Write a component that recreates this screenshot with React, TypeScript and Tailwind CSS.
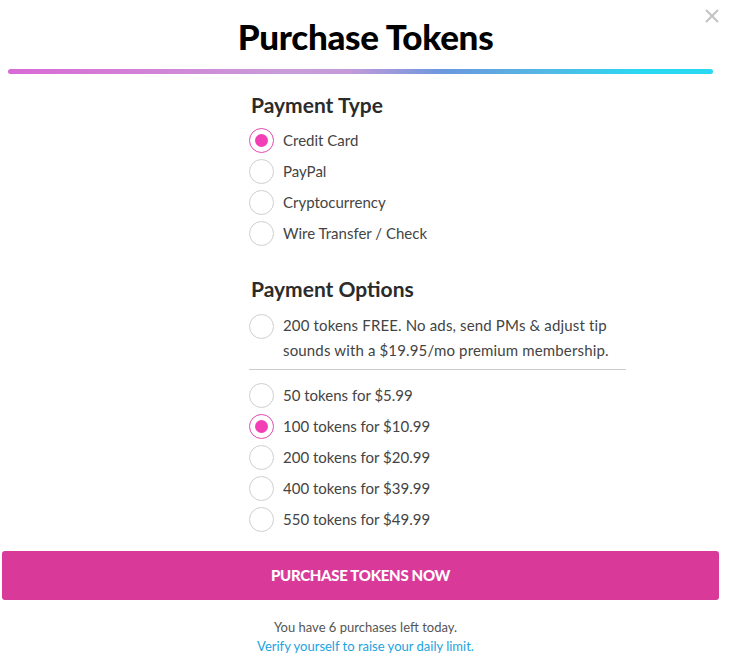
import React from "react";

function Radio({ checked }: { checked?: boolean }) {
  return checked ? (
    <span className="flex h-[25px] w-[25px] shrink-0 items-center justify-center rounded-full border border-[#e04aae] bg-white">
      <span className="h-[13px] w-[13px] rounded-full bg-[#f23fb6]" />
    </span>
  ) : (
    <span className="h-[25px] w-[25px] shrink-0 rounded-full border border-[#cfcfcf] bg-white" />
  );
}

function Option({ label, checked }: { label: string; checked?: boolean }) {
  return (
    <div className="flex h-[31px] items-center gap-[9px]">
      <Radio checked={checked} />
      <span className="text-[15px] text-[#444]">{label}</span>
    </div>
  );
}

export default function App() {
  const body = { fontFamily: "Lato, 'Open Sans', sans-serif" };
  return (
    <div className="relative h-[658px] w-[731px] bg-white" style={body}>
      <button className="absolute right-[12px] top-[9px]">
        <svg width="14" height="14" viewBox="0 0 14 14">
          <path d="M1 1L13 13M13 1L1 13" stroke="#c2c2c2" strokeWidth="2" />
        </svg>
      </button>
      <div className="flex flex-col items-center pt-[17px]">
        <h1 className="text-[35px] font-black leading-[38px] tracking-[-0.3px] text-black">
          Purchase Tokens
        </h1>
      </div>
      <div className="mx-[8px] mt-[14px] h-[5px] w-[705px] rounded-full bg-[linear-gradient(90deg,#d96ad5_0%,#c99cd9_40%,#c59ad9_48%,#6a98de_62%,#55b6e3_75%,#2ad8f2_90%,#2ad8f2_100%)]" />
      <div className="ml-[249px] mt-[19px] w-[377px]">
        <h2 className="pl-[2px] text-[21px] font-bold leading-[24px] text-[#2b2b2b]">Payment Type</h2>
        <div className="mt-[8px]">
          <Option label="Credit Card" checked />
          <Option label="PayPal" />
          <Option label="Cryptocurrency" />
          <Option label="Wire Transfer / Check" />
        </div>
        <h2 className="mt-[28px] pl-[2px] text-[21px] font-bold leading-[24px] text-[#2b2b2b]">Payment Options</h2>
        <div className="mt-[13px] flex gap-[9px] pb-[6px]">
          <Radio />
          <span className="mt-[-1px] text-[15px] leading-[25px] tracking-[0.15px] text-[#444]">
            200 tokens FREE. No ads, send PMs &amp; adjust tip sounds with a $19.95/mo premium membership.
          </span>
        </div>
        <div className="h-px w-full bg-[#cccccc]" />
        <div className="mt-[10px]">
          <Option label="50 tokens for $5.99" />
          <Option label="100 tokens for $10.99" checked />
          <Option label="200 tokens for $20.99" />
          <Option label="400 tokens for $39.99" />
          <Option label="550 tokens for $49.99" />
        </div>
      </div>
      <div className="mx-[2px] mt-[16px] flex h-[49px] w-[717px] items-center justify-center rounded-[3px] bg-[#d93a9a]">
        <span className="text-[15px] font-black uppercase tracking-[-0.3px] text-white">
          Purchase Tokens Now
        </span>
      </div>
      <div className="mt-[18px] flex flex-col items-center text-[13px] leading-[19px]">
        <span className="text-[#555]">You have 6 purchases left today.</span>
        <span className="text-[#1ba3e0]">Verify yourself to raise your daily limit.</span>
      </div>
    </div>
  );
}
